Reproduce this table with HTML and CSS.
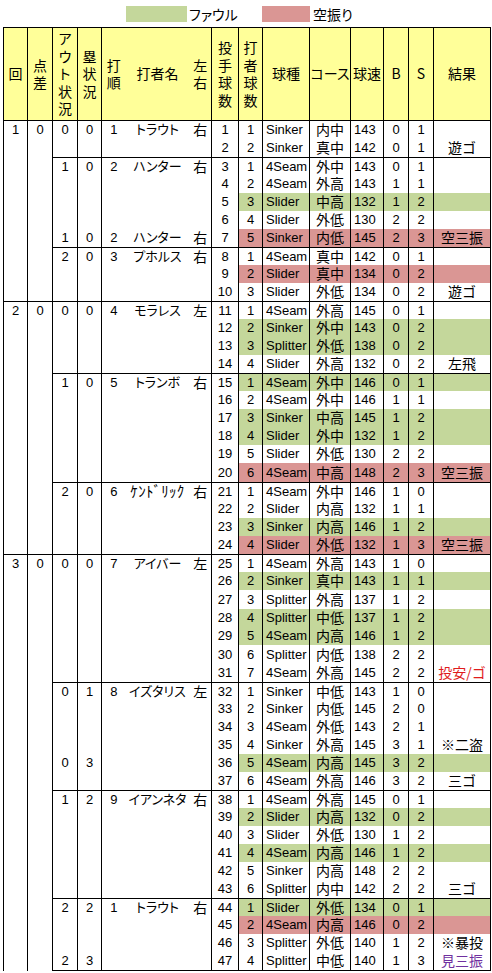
FILE: index.html
```html
<!DOCTYPE html>
<html lang="ja">
<head>
<meta charset="utf-8">
<title>投球記録</title>
<link rel="stylesheet" href="styles.css">
</head>
<body>
<div class="legend">
  <span class="swatch swatch-foul"></span><span class="label label-foul">ファウル</span>
  <span class="swatch swatch-miss"></span><span class="label label-miss">空振り</span>
</div>
<table class="pitch-table">
  <colgroup>
    <col class="w24"><col class="w25"><col class="w25"><col class="w24">
    <col class="w24"><col class="w64"><col class="w22">
    <col class="w27"><col class="w24"><col class="w47"><col class="w41">
    <col class="w33"><col class="w25"><col class="w25"><col class="w57">
  </colgroup>
  <thead>
    <tr>
      <th>回</th><th>点<br>差</th><th>ア<br>ウ<br>ト<br>状<br>況</th><th>塁<br>状<br>況</th>
      <th>打<br>順</th><th>打者名</th><th>左<br>右</th>
      <th>投<br>手<br>球<br>数</th><th>打<br>者<br>球<br>数</th><th>球種</th><th>コース</th><th>球速</th><th>B</th><th>S</th><th>結果</th>
    </tr>
  </thead>
  <tbody>
    <tr><td>1</td><td>0</td><td>0</td><td>0</td><td>1</td><td class="jp nm">トラウト</td><td class="jp">右</td><td>1</td><td>1</td><td>Sinker</td><td class="jp">内中</td><td>143</td><td>0</td><td>1</td><td class="jp"></td></tr>
    <tr><td></td><td></td><td></td><td></td><td></td><td class="jp nm"></td><td class="jp"></td><td>2</td><td>2</td><td>Sinker</td><td class="jp">真中</td><td>142</td><td>0</td><td>1</td><td class="jp">遊ゴ</td></tr>
    <tr class="batter"><td></td><td></td><td>1</td><td>0</td><td>2</td><td class="jp nm">ハンター</td><td class="jp">右</td><td>3</td><td>1</td><td>4Seam</td><td class="jp">外中</td><td>143</td><td>0</td><td>1</td><td class="jp"></td></tr>
    <tr><td></td><td></td><td></td><td></td><td></td><td class="jp nm"></td><td class="jp"></td><td>4</td><td>2</td><td>4Seam</td><td class="jp">外高</td><td>143</td><td>1</td><td>1</td><td class="jp"></td></tr>
    <tr class="foul"><td></td><td></td><td></td><td></td><td></td><td class="jp nm"></td><td class="jp"></td><td>5</td><td>3</td><td>Slider</td><td class="jp">中高</td><td>132</td><td>1</td><td>2</td><td class="jp"></td></tr>
    <tr><td></td><td></td><td></td><td></td><td></td><td class="jp nm"></td><td class="jp"></td><td>6</td><td>4</td><td>Slider</td><td class="jp">外低</td><td>130</td><td>2</td><td>2</td><td class="jp"></td></tr>
    <tr class="miss"><td></td><td></td><td>1</td><td>0</td><td>2</td><td class="jp nm">ハンター</td><td class="jp">右</td><td>7</td><td>5</td><td>Sinker</td><td class="jp">内低</td><td>145</td><td>2</td><td>3</td><td class="jp">空三振</td></tr>
    <tr class="batter"><td></td><td></td><td>2</td><td>0</td><td>3</td><td class="jp nm">プホルス</td><td class="jp">右</td><td>8</td><td>1</td><td>4Seam</td><td class="jp">真中</td><td>142</td><td>0</td><td>1</td><td class="jp"></td></tr>
    <tr class="miss"><td></td><td></td><td></td><td></td><td></td><td class="jp nm"></td><td class="jp"></td><td>9</td><td>2</td><td>Slider</td><td class="jp">真中</td><td>134</td><td>0</td><td>2</td><td class="jp"></td></tr>
    <tr><td></td><td></td><td></td><td></td><td></td><td class="jp nm"></td><td class="jp"></td><td>10</td><td>3</td><td>Slider</td><td class="jp">外低</td><td>134</td><td>0</td><td>2</td><td class="jp">遊ゴ</td></tr>
    <tr class="inning"><td>2</td><td>0</td><td>0</td><td>0</td><td>4</td><td class="jp nm">モラレス</td><td class="jp">左</td><td>11</td><td>1</td><td>4Seam</td><td class="jp">外高</td><td>145</td><td>0</td><td>1</td><td class="jp"></td></tr>
    <tr class="foul"><td></td><td></td><td></td><td></td><td></td><td class="jp nm"></td><td class="jp"></td><td>12</td><td>2</td><td>Sinker</td><td class="jp">外中</td><td>143</td><td>0</td><td>2</td><td class="jp"></td></tr>
    <tr class="foul"><td></td><td></td><td></td><td></td><td></td><td class="jp nm"></td><td class="jp"></td><td>13</td><td>3</td><td>Splitter</td><td class="jp">外低</td><td>138</td><td>0</td><td>2</td><td class="jp"></td></tr>
    <tr><td></td><td></td><td></td><td></td><td></td><td class="jp nm"></td><td class="jp"></td><td>14</td><td>4</td><td>Slider</td><td class="jp">外高</td><td>132</td><td>0</td><td>2</td><td class="jp">左飛</td></tr>
    <tr class="batter foul"><td></td><td></td><td>1</td><td>0</td><td>5</td><td class="jp nm">トランボ</td><td class="jp">右</td><td>15</td><td>1</td><td>4Seam</td><td class="jp">外中</td><td>146</td><td>0</td><td>1</td><td class="jp"></td></tr>
    <tr><td></td><td></td><td></td><td></td><td></td><td class="jp nm"></td><td class="jp"></td><td>16</td><td>2</td><td>4Seam</td><td class="jp">外中</td><td>146</td><td>1</td><td>1</td><td class="jp"></td></tr>
    <tr class="foul"><td></td><td></td><td></td><td></td><td></td><td class="jp nm"></td><td class="jp"></td><td>17</td><td>3</td><td>Sinker</td><td class="jp">中高</td><td>145</td><td>1</td><td>2</td><td class="jp"></td></tr>
    <tr class="foul"><td></td><td></td><td></td><td></td><td></td><td class="jp nm"></td><td class="jp"></td><td>18</td><td>4</td><td>Slider</td><td class="jp">外中</td><td>132</td><td>1</td><td>2</td><td class="jp"></td></tr>
    <tr><td></td><td></td><td></td><td></td><td></td><td class="jp nm"></td><td class="jp"></td><td>19</td><td>5</td><td>Slider</td><td class="jp">外低</td><td>130</td><td>2</td><td>2</td><td class="jp"></td></tr>
    <tr class="miss tall"><td></td><td></td><td></td><td></td><td></td><td class="jp nm"></td><td class="jp"></td><td>20</td><td>6</td><td>4Seam</td><td class="jp">中高</td><td>148</td><td>2</td><td>3</td><td class="jp">空三振</td></tr>
    <tr class="batter"><td></td><td></td><td>2</td><td>0</td><td>6</td><td class="jp nm-half">ｹﾝﾄﾞﾘｯｸ</td><td class="jp">右</td><td>21</td><td>1</td><td>4Seam</td><td class="jp">外中</td><td>146</td><td>1</td><td>0</td><td class="jp"></td></tr>
    <tr><td></td><td></td><td></td><td></td><td></td><td class="jp nm"></td><td class="jp"></td><td>22</td><td>2</td><td>Slider</td><td class="jp">内高</td><td>132</td><td>1</td><td>1</td><td class="jp"></td></tr>
    <tr class="foul"><td></td><td></td><td></td><td></td><td></td><td class="jp nm"></td><td class="jp"></td><td>23</td><td>3</td><td>Sinker</td><td class="jp">内高</td><td>146</td><td>1</td><td>2</td><td class="jp"></td></tr>
    <tr class="miss"><td></td><td></td><td></td><td></td><td></td><td class="jp nm"></td><td class="jp"></td><td>24</td><td>4</td><td>Slider</td><td class="jp">外低</td><td>132</td><td>1</td><td>3</td><td class="jp">空三振</td></tr>
    <tr class="inning"><td>3</td><td>0</td><td>0</td><td>0</td><td>7</td><td class="jp nm">アイバー</td><td class="jp">左</td><td>25</td><td>1</td><td>4Seam</td><td class="jp">外高</td><td>143</td><td>1</td><td>0</td><td class="jp"></td></tr>
    <tr class="foul"><td></td><td></td><td></td><td></td><td></td><td class="jp nm"></td><td class="jp"></td><td>26</td><td>2</td><td>Sinker</td><td class="jp">真中</td><td>143</td><td>1</td><td>1</td><td class="jp"></td></tr>
    <tr class="tall"><td></td><td></td><td></td><td></td><td></td><td class="jp nm"></td><td class="jp"></td><td>27</td><td>3</td><td>Splitter</td><td class="jp">外高</td><td>137</td><td>1</td><td>2</td><td class="jp"></td></tr>
    <tr class="foul"><td></td><td></td><td></td><td></td><td></td><td class="jp nm"></td><td class="jp"></td><td>28</td><td>4</td><td>Splitter</td><td class="jp">中低</td><td>137</td><td>1</td><td>2</td><td class="jp"></td></tr>
    <tr class="foul"><td></td><td></td><td></td><td></td><td></td><td class="jp nm"></td><td class="jp"></td><td>29</td><td>5</td><td>4Seam</td><td class="jp">内高</td><td>146</td><td>1</td><td>2</td><td class="jp"></td></tr>
    <tr class="tall"><td></td><td></td><td></td><td></td><td></td><td class="jp nm"></td><td class="jp"></td><td>30</td><td>6</td><td>Splitter</td><td class="jp">内低</td><td>138</td><td>2</td><td>2</td><td class="jp"></td></tr>
    <tr><td></td><td></td><td></td><td></td><td></td><td class="jp nm"></td><td class="jp"></td><td>31</td><td>7</td><td>4Seam</td><td class="jp">外高</td><td>145</td><td>2</td><td>2</td><td class="jp res-hit">投安/ゴ</td></tr>
    <tr class="batter"><td></td><td></td><td>0</td><td>1</td><td>8</td><td class="jp nm">イズタリス</td><td class="jp">左</td><td>32</td><td>1</td><td>Sinker</td><td class="jp">中低</td><td>143</td><td>1</td><td>0</td><td class="jp"></td></tr>
    <tr><td></td><td></td><td></td><td></td><td></td><td class="jp nm"></td><td class="jp"></td><td>33</td><td>2</td><td>Sinker</td><td class="jp">内低</td><td>145</td><td>2</td><td>0</td><td class="jp"></td></tr>
    <tr><td></td><td></td><td></td><td></td><td></td><td class="jp nm"></td><td class="jp"></td><td>34</td><td>3</td><td>4Seam</td><td class="jp">外低</td><td>143</td><td>2</td><td>1</td><td class="jp"></td></tr>
    <tr><td></td><td></td><td></td><td></td><td></td><td class="jp nm"></td><td class="jp"></td><td>35</td><td>4</td><td>Sinker</td><td class="jp">外高</td><td>145</td><td>3</td><td>1</td><td class="jp">※二盗</td></tr>
    <tr class="foul"><td></td><td></td><td>0</td><td>3</td><td></td><td class="jp nm"></td><td class="jp"></td><td>36</td><td>5</td><td>4Seam</td><td class="jp">内高</td><td>145</td><td>3</td><td>2</td><td class="jp"></td></tr>
    <tr><td></td><td></td><td></td><td></td><td></td><td class="jp nm"></td><td class="jp"></td><td>37</td><td>6</td><td>4Seam</td><td class="jp">外高</td><td>146</td><td>3</td><td>2</td><td class="jp">三ゴ</td></tr>
    <tr class="batter"><td></td><td></td><td>1</td><td>2</td><td>9</td><td class="jp nm">イアンネタ</td><td class="jp">右</td><td>38</td><td>1</td><td>4Seam</td><td class="jp">外高</td><td>145</td><td>0</td><td>1</td><td class="jp"></td></tr>
    <tr class="foul"><td></td><td></td><td></td><td></td><td></td><td class="jp nm"></td><td class="jp"></td><td>39</td><td>2</td><td>Slider</td><td class="jp">内高</td><td>132</td><td>0</td><td>2</td><td class="jp"></td></tr>
    <tr><td></td><td></td><td></td><td></td><td></td><td class="jp nm"></td><td class="jp"></td><td>40</td><td>3</td><td>Slider</td><td class="jp">外低</td><td>130</td><td>1</td><td>2</td><td class="jp"></td></tr>
    <tr class="foul"><td></td><td></td><td></td><td></td><td></td><td class="jp nm"></td><td class="jp"></td><td>41</td><td>4</td><td>4Seam</td><td class="jp">内高</td><td>146</td><td>1</td><td>2</td><td class="jp"></td></tr>
    <tr><td></td><td></td><td></td><td></td><td></td><td class="jp nm"></td><td class="jp"></td><td>42</td><td>5</td><td>Sinker</td><td class="jp">内高</td><td>148</td><td>2</td><td>2</td><td class="jp"></td></tr>
    <tr><td></td><td></td><td></td><td></td><td></td><td class="jp nm"></td><td class="jp"></td><td>43</td><td>6</td><td>Splitter</td><td class="jp">内中</td><td>142</td><td>2</td><td>2</td><td class="jp">三ゴ</td></tr>
    <tr class="batter foul"><td></td><td></td><td>2</td><td>2</td><td>1</td><td class="jp nm">トラウト</td><td class="jp">右</td><td>44</td><td>1</td><td>Slider</td><td class="jp">外低</td><td>134</td><td>0</td><td>1</td><td class="jp"></td></tr>
    <tr class="miss"><td></td><td></td><td></td><td></td><td></td><td class="jp nm"></td><td class="jp"></td><td>45</td><td>2</td><td>4Seam</td><td class="jp">内高</td><td>146</td><td>0</td><td>2</td><td class="jp"></td></tr>
    <tr><td></td><td></td><td></td><td></td><td></td><td class="jp nm"></td><td class="jp"></td><td>46</td><td>3</td><td>Splitter</td><td class="jp">外低</td><td>140</td><td>1</td><td>2</td><td class="jp">※暴投</td></tr>
    <tr class="last"><td></td><td></td><td>2</td><td>3</td><td></td><td class="jp nm"></td><td class="jp"></td><td>47</td><td>4</td><td>Splitter</td><td class="jp">中低</td><td>140</td><td>1</td><td>3</td><td class="jp res-look">見三振</td></tr>
  </tbody>
</table>
</body>
</html>
```
FILE: styles.css
```css
html, body {
  margin: 0;
  padding: 0;
  background: #fff;
}
body {
  font-family: "Liberation Sans", "Noto Sans CJK JP", sans-serif;
  color: #000;
}

/* legend */
.legend {
  height: 27px;
  display: flex;
  align-items: center;
  padding-left: 126px;
  font-family: "Noto Sans CJK JP", sans-serif;
  font-size: 14px;
  font-feature-settings: "palt";
  line-height: 16px;
}
.swatch {
  height: 16px;
  display: block;
}
.swatch-foul {
  width: 61px;
  background: #c4d79b;
}
.swatch-miss {
  width: 48px;
  background: #da9694;
}
.label-foul {
  width: 73px;
  padding-left: 2px;
}
.label-miss {
  padding-left: 3px;
}

/* table */
.pitch-table {
  border-collapse: collapse;
  table-layout: fixed;
  width: 488px;
  margin-left: 3px;
}
.w22 { width: 22px; }
.w24 { width: 24px; }
.w25 { width: 25px; }
.w27 { width: 27px; }
.w33 { width: 33px; }
.w41 { width: 41px; }
.w47 { width: 47px; }
.w57 { width: 57px; }
.w64 { width: 64px; }

.pitch-table th,
.pitch-table td {
  padding: 0;
  border: 0;
  border-right: 1px solid #000;
  text-align: center;
  vertical-align: middle;
  white-space: nowrap;
}
.pitch-table tr > :first-child {
  border-left: 1px solid #000;
}
.pitch-table tr > :nth-child(5),
.pitch-table tr > :nth-child(6) {
  border-right: 0;
}

.pitch-table th {
  height: 92px;
  background: #ffff99;
  font-family: "Noto Sans CJK JP", sans-serif;
  font-weight: normal;
  font-size: 14px;
  line-height: 17.5px;
  font-feature-settings: "palt";
  border-top: 1px solid #000;
  border-bottom: 1px solid #000;
}

/* row heights: 18px rows, separator rows give 1px to their top line */
.pitch-table td {
  height: 18px;
  font-size: 13px;
  line-height: 16px;
}
.pitch-table tr.tall td {
  height: 19px;
}
.pitch-table tr.batter td,
.pitch-table tr.inning td {
  height: 17px;
}

/* Japanese text sits 1px higher: 2px bottom padding, height reduced to match */
.pitch-table td.jp {
  font-family: "Noto Sans CJK JP", sans-serif;
  font-size: 14px;
  line-height: 14px;
  padding-bottom: 2px;
  height: 16px;
}
.pitch-table tr.tall td.jp {
  height: 17px;
}
.pitch-table tr.batter td.jp,
.pitch-table tr.inning td.jp {
  height: 15px;
}
.pitch-table td.nm {
  font-size: 13px;
  font-feature-settings: "palt";
}
.pitch-table td.nm-half {
  font-size: 15px;
  letter-spacing: 0.3px;
}
.pitch-table td:nth-child(10),
.pitch-table td:nth-child(12) {
  text-align: left;
  padding-left: 3px;
}

/* group separators */
.pitch-table tr.inning td {
  border-top: 1px solid #000;
}
.pitch-table tr.batter td:nth-child(n+3) {
  border-top: 1px solid #000;
}
.pitch-table tr.last td:nth-child(n+3) {
  border-bottom: 1px solid #000;
}

/* highlighted pitches */
.pitch-table tr.foul td:nth-child(n+9) {
  background: #c4d79b;
}
.pitch-table tr.miss td:nth-child(n+9) {
  background: #da9694;
}

.res-hit { color: #e01c1c; }
.res-look { color: #7030a0; }
```
